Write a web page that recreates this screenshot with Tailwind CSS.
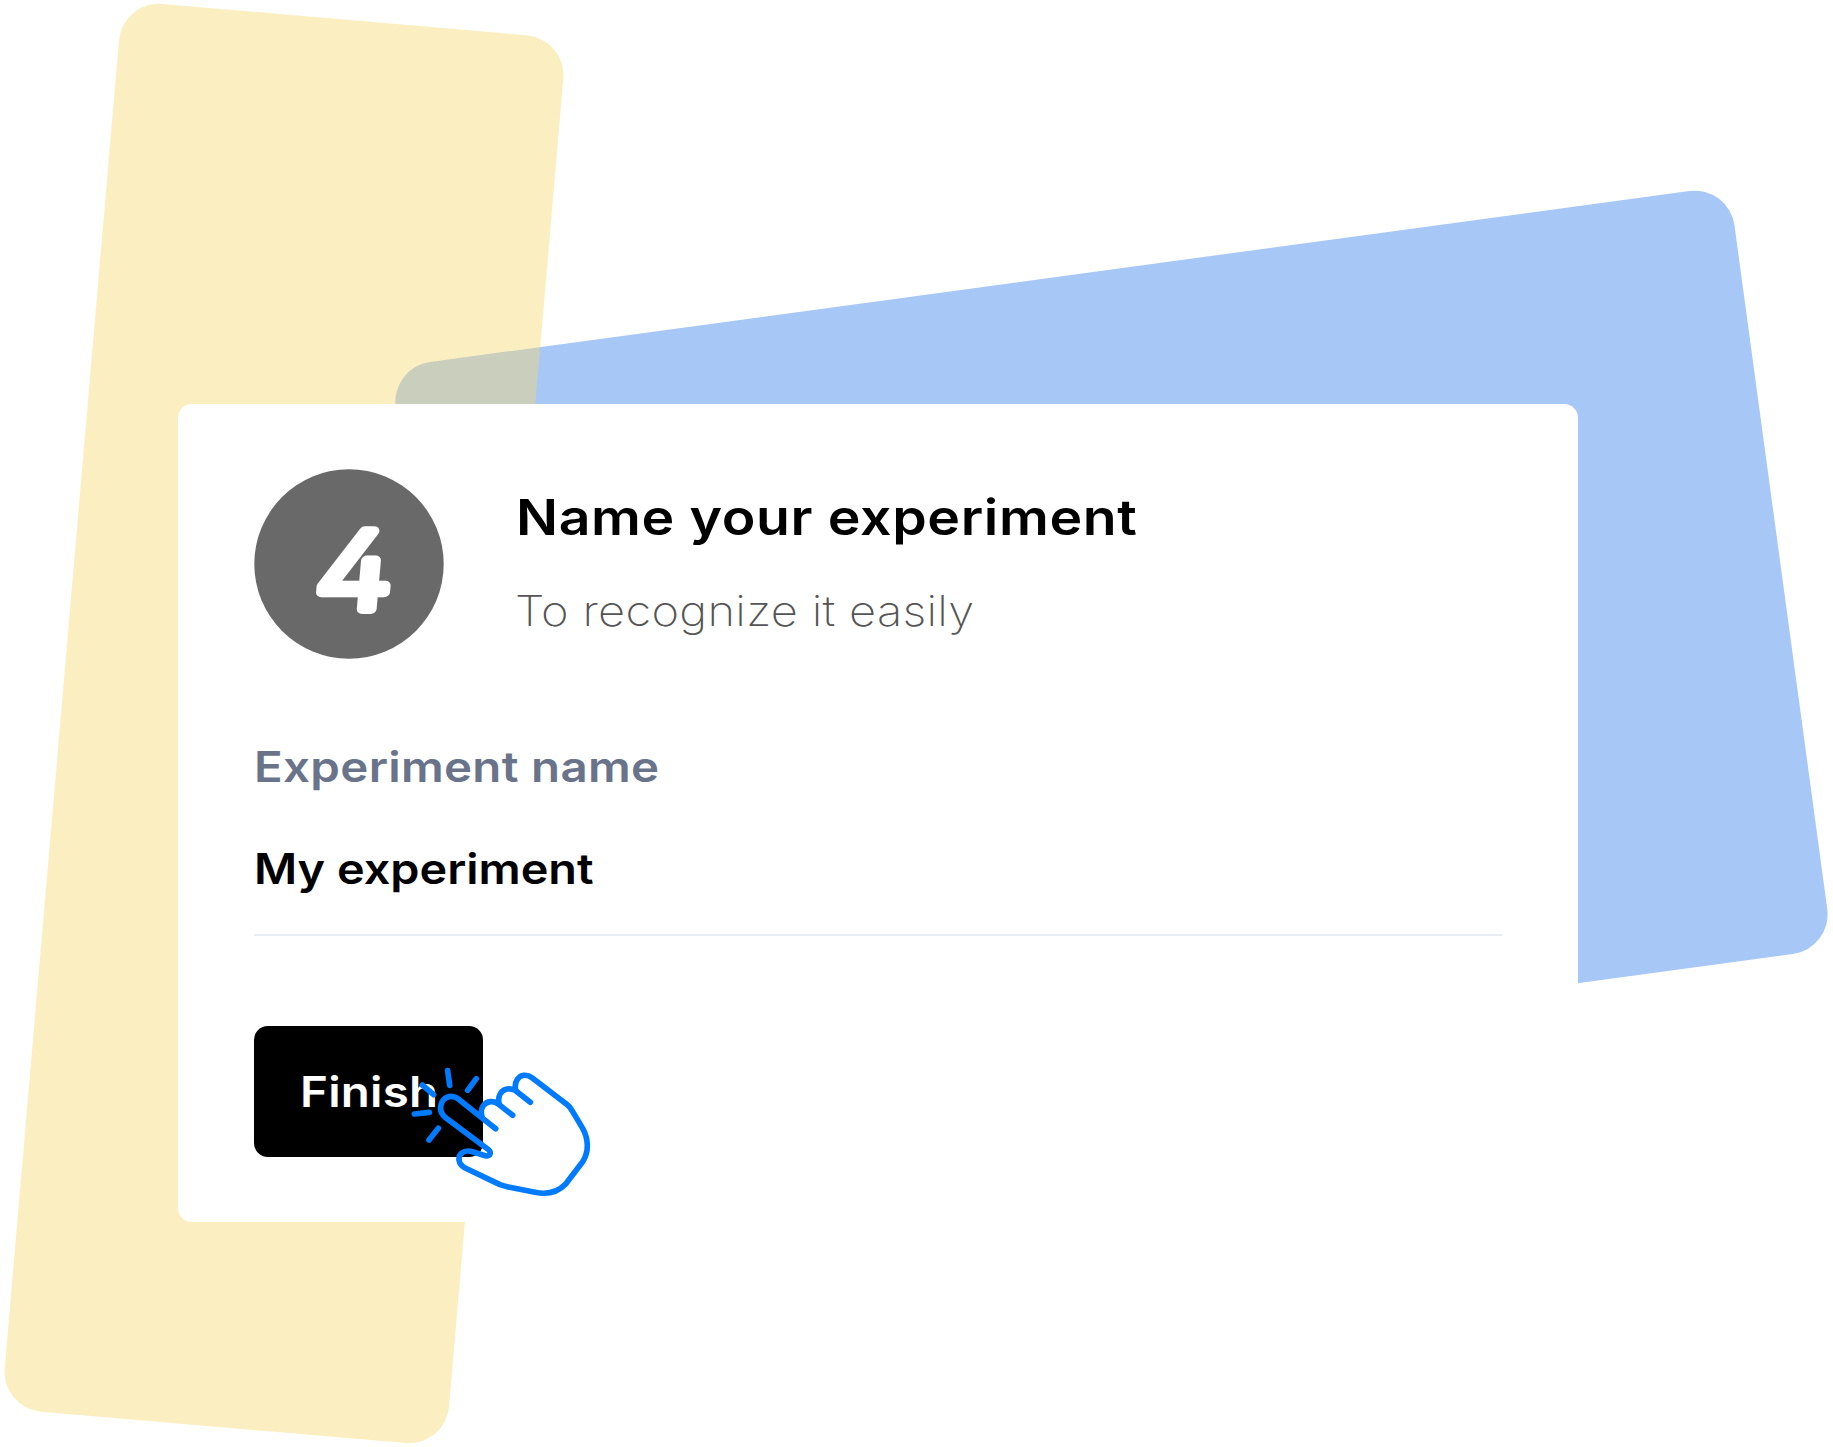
<!DOCTYPE html>
<html lang="en">
<head>
<meta charset="utf-8">
<title>Name your experiment</title>
<script src="https://cdn.jsdelivr.net/npm/@tailwindcss/browser@4"></script>
</head>
<body class="relative h-[1447px] w-[1833px] overflow-hidden bg-white font-[Inter,sans-serif]">
  <!-- Tilted backdrop panels -->
  <div class="absolute left-[435.6px] top-[273.2px] h-[770px] w-[1351px] rotate-[-7.73deg] rounded-[40px] bg-[#a7c7f7]"></div>
  <div class="absolute left-[60.6px] top-[16.5px] h-[1413.3px] w-[446.2px] rotate-[4.92deg] rounded-[40px] bg-[#f5da70]/43"></div>

  <main class="relative ml-[178px] mt-[404px] flex h-[818px] w-[1400px] flex-col rounded-[14px] bg-white px-[76px] pt-[65px]">
    <header class="flex h-[190px] gap-[73px]">
      <svg class="size-[190px] shrink-0" viewBox="0 0 190 190">
        <circle cx="95" cy="95" r="94.7" fill="#696969"/>
        <text transform="translate(58.5 139.5) skewX(-5) scale(1.16 1)" font-weight="300" font-size="107" fill="#fff" stroke="#fff" stroke-width="10" stroke-linejoin="round" style="font-feature-settings:'cv02'">4</text>
      </svg>
      <div class="flex flex-col pt-[19px]">
        <h1 class="-ml-px h-[60px] whitespace-nowrap text-[49px] leading-[60px] font-semibold tracking-[0.56px] text-black"><span class="inline-block origin-left scale-x-113">Name your experiment</span></h1>
        <p class="-ml-[2px] mt-[33px] h-[60px] whitespace-nowrap text-[42px] leading-[60px] font-extralight tracking-[0.26px] text-[#555]"><span class="inline-block origin-left scale-x-112">To recognize it easily</span></p>
      </div>
    </header>
    <label class="mt-[78px] h-[60px] whitespace-nowrap text-[42px] leading-[60px] font-semibold tracking-[0.27px] text-[#697389]"><span class="inline-block origin-left scale-x-113">Experiment name</span></label>
    <div class="mt-[42px] h-[97px] w-[1248px] shrink-0 whitespace-nowrap border-b-2 border-[#e8ecf4] text-[42px] leading-[60px] font-semibold text-black"><span class="inline-block origin-left scale-x-[1.115]">My experiment</span></div>
    <button class="mt-[90px] flex h-[131px] w-[229px] shrink-0 items-center rounded-[14px] bg-black pl-[46px] text-[42px] font-semibold tracking-[0.2px] text-white"><span class="inline-block origin-left scale-x-113">Finish</span></button>
  </main>

  <!-- Tapping hand cursor -->
  <svg class="absolute left-[400px] top-[1050px] h-[160px] w-[200px]" viewBox="0 0 600 480" fill="none" stroke="#007bff" stroke-width="17" stroke-linecap="round" stroke-linejoin="round">
    <path d="M287 236 L174 146 C152 131 128 143 123 165 C119 182 125 194 138 204 L262 296 C276 306 272 320 256 317 L212 304 C190 299 175 314 177 330 C179 342 184 348 194 353 L300 404 C308 407 315 409 325 411 L405 427 C445 435 475 425 497 402 L548 335 C568 305 565 265 548 235 L518 185 C512 174 508 168 498 161 L397 84 C380 71 362 74 352 88 C344 99 345 110 347 120"/>
    <path d="M391 157 L347 122 C330 112 310 116 301 131 C295 141 295 150 297 160"/>
    <path d="M338 196 L296 163 C281 150 260 153 250 167 C241 180 243 190 246 200"/>
    <path d="M143 62 149 106M229 86 203 121M67 105 101 134M43 192 88 187M115 235 87 270"/>
  </svg>
</body>
</html>
